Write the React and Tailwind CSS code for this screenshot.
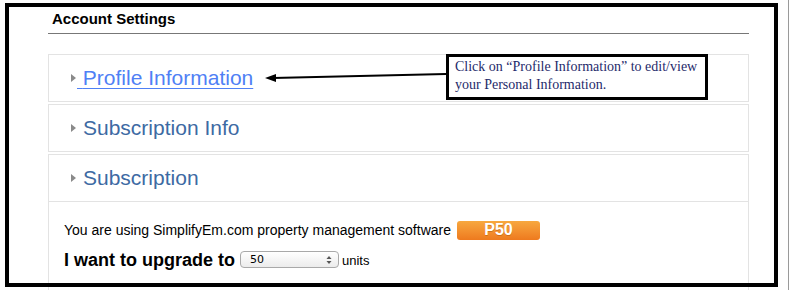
export default function App() {
  const sections = [
    { id: 'profile', title: 'Profile Information', link: true },
    { id: 'subinfo', title: 'Subscription Info' },
  ]

  return (
    <div className="relative w-[799px] h-[290px] overflow-hidden bg-white font-['Liberation_Sans',Arial,sans-serif]">
      <main className="ml-[48px] w-[701px]">
        <h1 className="pt-[10px] pb-[5px] pl-[4px] text-[15px] leading-[18px] font-bold text-black border-b border-[#777]">
          Account Settings
        </h1>

        <div className="mt-[20px] flex flex-col gap-[2px]">
          {sections.map(s => (
            <div key={s.id} className="h-[48px] border border-[#e3e3e3] flex items-center pl-[22px]">
              <span className="w-0 h-0 border-y-[4px] border-y-transparent border-l-[5px] border-l-[#8a8a8a]" />
              {s.link ? (
                <a href="#" className="ml-[1px] text-[21px] leading-[24px] text-[#4f80f5] underline underline-offset-[3px] decoration-1">
                  &nbsp;{s.title}
                </a>
              ) : (
                <span className="ml-[7px] text-[21px] leading-[24px] text-[#3d6aa3]">{s.title}</span>
              )}
            </div>
          ))}

          <div className="h-[140px] border border-[#e3e3e3]">
            <div className="h-[47px] border-b border-[#e3e3e3] flex items-center pl-[22px]">
              <span className="w-0 h-0 border-y-[4px] border-y-transparent border-l-[5px] border-l-[#8a8a8a]" />
              <span className="ml-[7px] text-[21px] leading-[24px] text-[#3d6aa3]">Subscription</span>
            </div>
            <div className="pl-[15px] pt-[18px]">
              <div className="flex items-center text-[14px] leading-[20px] text-black">
                <span>You are using SimplifyEm.com property management software</span>
                <span className="ml-[6px] w-[83px] h-[19px] rounded-[3px] bg-gradient-to-b from-[#f7a83f] to-[#ee7a1e] flex items-center justify-center text-white font-bold text-[16px] leading-none [text-shadow:0_1px_0_rgba(150,70,0,0.4)]">
                  P50
                </span>
              </div>
              <div className="mt-[10px] flex items-center">
                <span className="text-[18px] leading-[18px] font-bold text-black">I want to upgrade to</span>
                <div className="ml-[5px] w-[99px] h-[17px] rounded-[4px] border border-[#a9a9a9] bg-gradient-to-b from-white to-[#ececec] flex items-center justify-between pl-[9px] pr-[6px]">
                  <span className="text-[11px] leading-none text-black font-['DejaVu_Sans',sans-serif]">50</span>
                  <svg width="6" height="10" viewBox="0 0 6 10">
                    <path d="M3 1 L5.5 4 L0.5 4 Z" fill="#555" />
                    <path d="M3 9 L5.5 6 L0.5 6 Z" fill="#555" />
                  </svg>
                </div>
                <span className="ml-[3px] mt-[3px] text-[13px] leading-[16px] text-black">units</span>
              </div>
            </div>
          </div>
        </div>
      </main>

      {/* annotation: arrow + callout */}
      <svg className="absolute left-[260px] top-[66px]" width="190" height="20" viewBox="0 0 190 20">
        <path d="M13 12 L186 8" stroke="#000" strokeWidth="2" fill="none" />
        <path d="M5 12 L16 8 L16 16 Z" fill="#000" />
      </svg>
      <div className="absolute left-[446px] top-[54px] w-[262px] h-[46px] border-[3px] border-black bg-white pl-[6px] pt-[1px] whitespace-nowrap font-['Liberation_Serif','Times_New_Roman',serif] text-[14px] leading-[18px] text-[#1f2b6b]">
        <p>Click on “Profile Information” to edit/view</p>
        <p>your Personal Information.</p>
      </div>

      <div className="absolute left-[5px] top-[3px] w-[773px] h-[284px] border-4 border-black pointer-events-none" />
      <div className="absolute left-[788px] top-0 bottom-0 w-px bg-[#9a9a9a]" />
    </div>
  )
}
